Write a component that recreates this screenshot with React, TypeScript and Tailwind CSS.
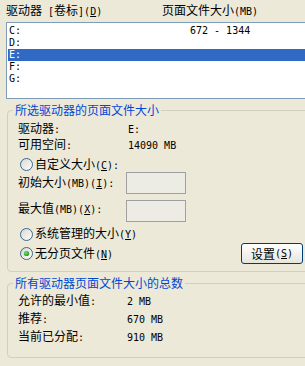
import React from "react";

function T({ s }: { s: string }) {
  const out: React.ReactNode[] = [];
  let i = 0;
  let key = 0;
  while (i < s.length) {
    const ch = s[i];
    if (ch === "&") {
      out.push(
        <span key={key++} className="font-['DejaVu_Sans_Mono'] text-[10px] underline underline-offset-[1px]">
          {s[i + 1]}
        </span>
      );
      i += 2;
      continue;
    }
    const ascii = ch.charCodeAt(0) < 128;
    let j = i;
    while (j < s.length && s[j] !== "&" && (s[j].charCodeAt(0) < 128) === ascii) j++;
    const run = s.slice(i, j);
    out.push(
      ascii ? (
        <span key={key++} className="font-['DejaVu_Sans_Mono'] text-[10px] whitespace-pre">
          {run}
        </span>
      ) : (
        <span key={key++}>{run}</span>
      )
    );
    i = j;
  }
  return <>{out}</>;
}

function Radio({ checked }: { checked?: boolean }) {
  return (
    <svg width="13" height="13" viewBox="0 0 13 13" className="shrink-0">
      <defs>
        <linearGradient id={checked ? "rgc" : "rgu"} x1="0" y1="0" x2="1" y2="1">
          <stop offset="0" stopColor="#d6d6d0" />
          <stop offset="1" stopColor="#ffffff" />
        </linearGradient>
        <radialGradient id="dot" cx="0.4" cy="0.4" r="0.6">
          <stop offset="0" stopColor="#7fe07b" />
          <stop offset="1" stopColor="#1e9a1e" />
        </radialGradient>
      </defs>
      <circle cx="6.5" cy="6.5" r="6" fill={`url(#${checked ? "rgc" : "rgu"})`} stroke="#3d6690" strokeWidth="1" />
      {checked && <circle cx="6.5" cy="6.5" r="2.6" fill="url(#dot)" />}
    </svg>
  );
}

function Group({ title, children, className }: { title: string; children: React.ReactNode; className?: string }) {
  return (
    <div className={"relative ml-[7px] w-[302px] rounded-[4px] border border-[#d0d0bf] " + (className ?? "")}>
      <span className="absolute left-[5px] top-[-9px] px-[2px] leading-[16px] bg-[#ece9d8] text-[#0046d5]">
        <T s={title} />
      </span>
      {children}
    </div>
  );
}

export default function App() {
  const drives = ["C:", "D:", "E:", "F:", "G:"];
  return (
    <div className="w-[305px] h-[366px] overflow-hidden bg-[#ece9d8] text-black text-[12px] font-['Noto_Sans_CJK_SC',sans-serif]">
      <div className="h-[22px] flex items-center pl-[6px] leading-[16px]">
        <div className="w-[156px]">
          <T s="驱动器 [卷标](&D)" />
        </div>
        <div>
          <T s="页面文件大小(MB)" />
        </div>
      </div>
      <div className="ml-[6px] w-[305px] h-[77px] border border-[#7f9db9] bg-white pt-[2px] px-[1px]">
        {drives.map((d) => (
          <div
            key={d}
            className={
              "h-[12px] flex items-center pl-[1px] font-['DejaVu_Sans_Mono'] text-[10px] leading-[12px] whitespace-pre " +
              (d === "E:" ? "bg-[#316ac5] text-white" : "")
            }
          >
            <div className="w-[181px]">{d}</div>
            {d === "C:" && <div>672 - 1344</div>}
          </div>
        ))}
      </div>

      <Group title="所选驱动器的页面文件大小" className="mt-[11px] pt-[10px] pl-[10px] pb-[7px]">
        <div className="h-[16px] flex items-center leading-[16px]">
          <div className="w-[110px]"><T s="驱动器:" /></div>
          <div><T s="E:" /></div>
        </div>
        <div className="h-[16px] flex items-center leading-[16px]">
          <div className="w-[110px]"><T s="可用空间:" /></div>
          <div><T s="14090 MB" /></div>
        </div>
        <div className="mt-[4px] h-[15px] flex items-center gap-[2px] pl-[2px] leading-[16px]">
          <Radio />
          <div><T s="自定义大小(&C):" /></div>
        </div>
        <div className="h-[22px] flex items-center leading-[16px]">
          <div className="w-[108px]"><T s="初始大小(MB)(&I):" /></div>
          <div className="w-[60px] h-[22px] border border-[#a0a0a0] bg-[#ecebe4]" />
        </div>
        <div className="mt-[6px] h-[22px] flex items-center leading-[16px]">
          <div className="w-[108px] mb-[4px]"><T s="最大值(MB)(&X):" /></div>
          <div className="w-[60px] h-[22px] border border-[#a0a0a0] bg-[#ecebe4]" />
        </div>
        <div className="mt-[4px] h-[16px] flex items-center gap-[2px] pl-[2px] leading-[16px]">
          <Radio />
          <div><T s="系统管理的大小(&Y)" /></div>
        </div>
        <div className="mt-[1px] h-[21px] flex items-center leading-[16px]">
          <div className="w-[223px] flex items-center gap-[2px] pl-[2px]">
            <Radio checked />
            <div><T s="无分页文件(&N)" /></div>
          </div>
          <button className="w-[62px] h-[21px] rounded-[3px] border border-[#003c74] bg-linear-to-b from-white to-[#e6e5dc] flex items-center justify-center leading-[16px]">
            <T s="设置(&S)" />
          </button>
        </div>
      </Group>

      <Group title="所有驱动器页面文件大小的总数" className="mt-[11px] pt-[8px] pl-[10px] pb-[11px]">
        <div className="h-[18px] flex items-center leading-[16px]">
          <div className="w-[109px]"><T s="允许的最小值:" /></div>
          <div><T s="2 MB" /></div>
        </div>
        <div className="h-[18px] flex items-center leading-[16px]">
          <div className="w-[109px]"><T s="推荐:" /></div>
          <div><T s="670 MB" /></div>
        </div>
        <div className="h-[18px] flex items-center leading-[16px]">
          <div className="w-[109px]"><T s="当前已分配:" /></div>
          <div><T s="910 MB" /></div>
        </div>
      </Group>
    </div>
  );
}
